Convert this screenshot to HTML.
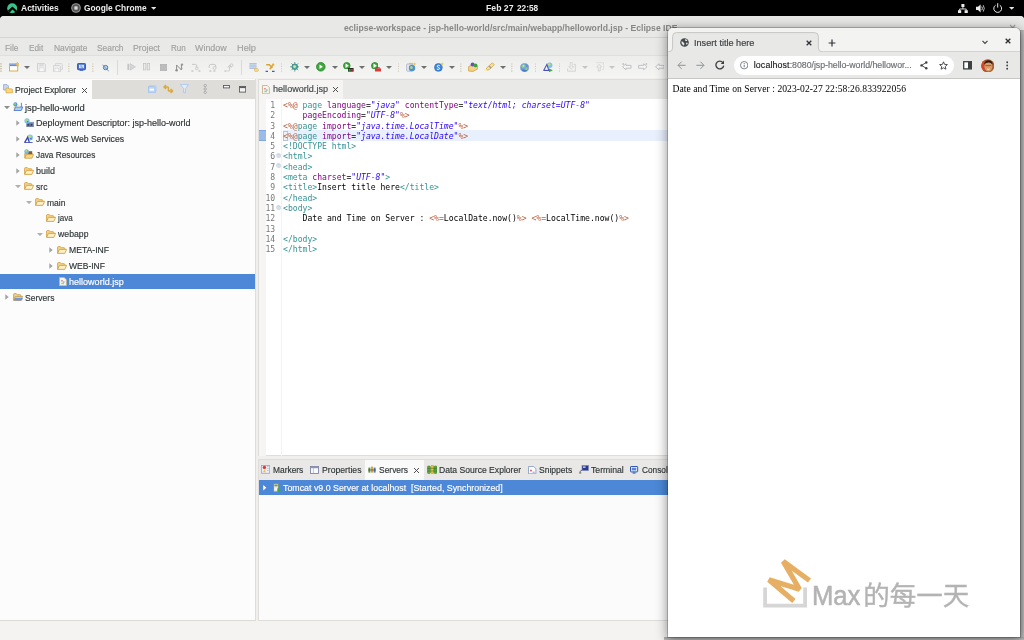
<!DOCTYPE html>
<html lang="en">
<head>
<meta charset="utf-8">
<title>Eclipse IDE - helloworld.jsp</title>
<style>
html,body{margin:0;padding:0;}
body{width:1024px;height:640px;overflow:hidden;background:#000;font-family:"Liberation Sans","DejaVu Sans",sans-serif;}
#root{position:relative;width:1024px;height:640px;overflow:hidden;background:#000;}
#root div, #root span.t, #root svg{position:absolute;}
span.t{white-space:pre;will-change:opacity;}
span.u{font-family:"Liberation Sans","DejaVu Sans",sans-serif;-webkit-text-stroke:.16px;}
span.m{font-family:"DejaVu Sans Mono","Liberation Mono",monospace;}
span.s{font-family:"Liberation Serif","DejaVu Serif",serif;}
span.c{font-family:"Liberation Sans","Noto Sans CJK SC",sans-serif;-webkit-text-stroke:.35px;}
/* GNOME top bar */
#topbar{left:0;top:0;width:1024px;height:16px;background:#000;}
/* Eclipse window */
#ecl{left:0;top:16px;width:1024px;height:624px;background:#e8e8e7;border-radius:4px 4px 0 0;overflow:hidden;}
#ecl-title{left:0;top:0;width:1024px;height:22px;background:#e8e8e7;border-bottom:1px solid #d4d4d3;box-sizing:border-box;}
#ecl-menu{left:0;top:22px;width:1024px;height:18px;background:#e9e9e8;border-bottom:1px solid #dfdfde;box-sizing:border-box;}
#ecl-tool{left:0;top:40px;width:1024px;height:22px;background:linear-gradient(#ededec,#f5f5f4);}
#ecl-work{left:0;top:62px;width:1024px;height:562px;background:#f1efed;}
/* left panel */
#pe{left:0;top:79px;width:255px;height:540.5px;background:#fcfcfc;border-right:1px solid #dfddd9;border-bottom:1px solid #dddbd8;box-sizing:content-box;}
#pe-tabs{left:0;top:.6px;width:255px;height:19px;background:#dfddda;}
#pe-tab{left:0;top:0;width:92px;height:19px;background:#fcfcfc;}
#pe-sel{left:0;top:194.6px;width:255px;height:15.6px;background:#4c88d7;}
/* editor */
#ed{left:258px;top:79px;width:766px;height:377px;background:#fff;border:1px solid #dfddd9;box-sizing:border-box;}
#ed-tabs{left:0;top:0;width:766px;height:18.5px;background:#e9e9e8;}
#ed-tab{left:0;top:0;width:84px;height:18.5px;background:#f5f4f3;}
#ed-ruler{left:0;top:18.5px;width:7px;height:357px;background:#f6f5f3;}
#ed-mark{left:0;top:50.3px;width:7px;height:10.6px;background:#9dbbe9;border-top:.6px solid #7fa7e4;border-bottom:.6px solid #7fa7e4;box-sizing:border-box;}
#ed-lnsep{left:22px;top:18.5px;width:1px;height:357px;background:#f3f3f3;}
#ed-cur{left:24px;top:50.4px;width:742px;height:10.2px;background:#e8f0fd;}
#ed-caret{left:24px;top:50.8px;width:4.6px;height:9.8px;border:.7px solid #c2c2c2;box-sizing:border-box;background:#eef3fb;}
/* bottom panel */
#bp{left:258px;top:459px;width:766px;height:161.5px;background:#fbfbfb;border:1px solid #dfddd9;box-sizing:border-box;}
#bp-tabs{left:0;top:0;width:766px;height:19.5px;background:#e9e8e6;}
#bp-tab{left:105.6px;top:0;width:59.4px;height:19.5px;background:#fafafa;}
#bp-sel{left:0;top:19.5px;width:766px;height:15.8px;background:#4c88d7;}
#status{left:0;top:621px;width:1024px;height:19px;background:#f4f3f2;}
/* chrome window */
#chr-shadow{left:659px;top:22px;width:365px;height:618px;}
#chr{z-index:5;left:668px;top:28px;width:352px;height:609px;background:#fff;border-radius:5px 5px 0 0;overflow:hidden;box-shadow:0 2px 12px 1px rgba(0,0,0,.42),0 0 0 1px rgba(0,0,0,.2);}
#chr-strip{left:0;top:0;width:353px;height:24px;background:#f3f3f2;}
#chr-tool{left:0;top:24px;width:353px;height:26.6px;background:#e8e8e7;border-bottom:1px solid #c6c6c5;box-sizing:border-box;}
#chr-omni{left:65.5px;top:4.3px;width:220.8px;height:18.8px;background:#fff;border-radius:9.4px;}
#chr-edge-r{z-index:5;left:1020px;top:30px;width:4px;height:610px;background:linear-gradient(90deg,#a9a9a9,#c4c4c4);}
#chr-edge-b{z-index:5;left:664px;top:637px;width:360px;height:3px;background:linear-gradient(#a8a8a8,#c0c0c0);}
</style>
</head>
<body>
<div id="root">
<div id="topbar"></div>
<div id="ecl">
  <div id="ecl-title"></div>
  <div id="ecl-menu"></div>
  <div id="ecl-tool"></div>
  <div id="ecl-work"></div>
</div>
<div id="pe"><div id="pe-tabs"><div id="pe-tab"></div></div><div id="pe-sel"></div></div>
<div id="ed"><div id="ed-tabs"><div id="ed-tab"></div></div><div id="ed-ruler"></div><div id="ed-lnsep"></div><div id="ed-cur"></div><div id="ed-caret"></div><div id="ed-mark"></div></div>
<div id="bp"><div id="bp-tabs"><div id="bp-tab"></div></div><div id="bp-sel"></div></div>
<div id="status"></div>
<div id="chr-edge-r"></div><div id="chr-edge-b"></div>
<div id="chr">
  <div id="chr-strip"></div>
  <svg style="left:0;top:0" width="353" height="26" viewBox="0 0 353 26"><path d="M-1 23.8H1Q4.6 23.8 4.6 20V8.4Q4.6 4.6 8.4 4.6H146.6Q150.4 4.6 150.4 8.4V20Q150.4 23.8 154 23.8H354V27H-1Z" fill="#e8e8e7" stroke="#c2c2c1" stroke-width=".9"/></svg>
  <div id="chr-tool"><div id="chr-omni"></div></div>
</div>

<!-- icons -->
<svg style="left:4.00px;top:105.95px;" width="6" height="3.2" viewBox="0 0 6 3.2"><path d="M0 0H6L3.0 3.2Z" fill="#8e8e8e"/></svg>
<svg style="left:16.30px;top:120.08px;" width="4" height="6" viewBox="0 0 4 6"><path d="M.3 .2L3.7 3L.3 5.8Z" fill="#a2a2a2"/></svg>
<svg style="left:16.30px;top:135.91px;" width="4" height="6" viewBox="0 0 4 6"><path d="M.3 .2L3.7 3L.3 5.8Z" fill="#a2a2a2"/></svg>
<svg style="left:16.30px;top:151.74px;" width="4" height="6" viewBox="0 0 4 6"><path d="M.3 .2L3.7 3L.3 5.8Z" fill="#a2a2a2"/></svg>
<svg style="left:16.30px;top:167.57px;" width="4" height="6" viewBox="0 0 4 6"><path d="M.3 .2L3.7 3L.3 5.8Z" fill="#a2a2a2"/></svg>
<svg style="left:15.00px;top:185.10px;" width="6" height="3.2" viewBox="0 0 6 3.2"><path d="M0 0H6L3.0 3.2Z" fill="#b0b0b0"/></svg>
<svg style="left:26.00px;top:200.93px;" width="6" height="3.2" viewBox="0 0 6 3.2"><path d="M0 0H6L3.0 3.2Z" fill="#b0b0b0"/></svg>
<svg style="left:37.00px;top:232.59px;" width="6" height="3.2" viewBox="0 0 6 3.2"><path d="M0 0H6L3.0 3.2Z" fill="#b0b0b0"/></svg>
<svg style="left:49.30px;top:246.72px;" width="4" height="6" viewBox="0 0 4 6"><path d="M.3 .2L3.7 3L.3 5.8Z" fill="#a2a2a2"/></svg>
<svg style="left:49.30px;top:262.55px;" width="4" height="6" viewBox="0 0 4 6"><path d="M.3 .2L3.7 3L.3 5.8Z" fill="#a2a2a2"/></svg>
<svg style="left:5.30px;top:294.21px;" width="4" height="6" viewBox="0 0 4 6"><path d="M.3 .2L3.7 3L.3 5.8Z" fill="#a2a2a2"/></svg>
<svg style="left:24.00px;top:166.57px;" width="10.2" height="8" viewBox="0 0 10.2 8"><path d="M0.6 7.2V1.4Q0.6 .6 1.4 .6H3.3L4.3 1.7H7Q7.8 1.7 7.8 2.5V3.4" fill="#f3d58c" stroke="#d6a243" stroke-width=".9"/><path d="M0.6 7.4L2.4 3.4H9.6L7.8 7.4Z" fill="#fdf0c6" stroke="#d6a243" stroke-width=".9" stroke-linejoin="round"/></svg>
<svg style="left:24.00px;top:182.40px;" width="10.2" height="8" viewBox="0 0 10.2 8"><path d="M0.6 7.2V1.4Q0.6 .6 1.4 .6H3.3L4.3 1.7H7Q7.8 1.7 7.8 2.5V3.4" fill="#f3d58c" stroke="#d6a243" stroke-width=".9"/><path d="M0.6 7.4L2.4 3.4H9.6L7.8 7.4Z" fill="#fdf0c6" stroke="#d6a243" stroke-width=".9" stroke-linejoin="round"/></svg>
<svg style="left:35.00px;top:198.23px;" width="10.2" height="8" viewBox="0 0 10.2 8"><path d="M0.6 7.2V1.4Q0.6 .6 1.4 .6H3.3L4.3 1.7H7Q7.8 1.7 7.8 2.5V3.4" fill="#f3d58c" stroke="#d6a243" stroke-width=".9"/><path d="M0.6 7.4L2.4 3.4H9.6L7.8 7.4Z" fill="#fdf0c6" stroke="#d6a243" stroke-width=".9" stroke-linejoin="round"/></svg>
<svg style="left:46.00px;top:214.06px;" width="10.2" height="8" viewBox="0 0 10.2 8"><path d="M0.6 7.2V1.4Q0.6 .6 1.4 .6H3.3L4.3 1.7H7Q7.8 1.7 7.8 2.5V3.4" fill="#f3d58c" stroke="#d6a243" stroke-width=".9"/><path d="M0.6 7.4L2.4 3.4H9.6L7.8 7.4Z" fill="#fdf0c6" stroke="#d6a243" stroke-width=".9" stroke-linejoin="round"/></svg>
<svg style="left:46.00px;top:229.89px;" width="10.2" height="8" viewBox="0 0 10.2 8"><path d="M0.6 7.2V1.4Q0.6 .6 1.4 .6H3.3L4.3 1.7H7Q7.8 1.7 7.8 2.5V3.4" fill="#f3d58c" stroke="#d6a243" stroke-width=".9"/><path d="M0.6 7.4L2.4 3.4H9.6L7.8 7.4Z" fill="#fdf0c6" stroke="#d6a243" stroke-width=".9" stroke-linejoin="round"/></svg>
<svg style="left:57.00px;top:245.72px;" width="10.2" height="8" viewBox="0 0 10.2 8"><path d="M0.6 7.2V1.4Q0.6 .6 1.4 .6H3.3L4.3 1.7H7Q7.8 1.7 7.8 2.5V3.4" fill="#f3d58c" stroke="#d6a243" stroke-width=".9"/><path d="M0.6 7.4L2.4 3.4H9.6L7.8 7.4Z" fill="#fdf0c6" stroke="#d6a243" stroke-width=".9" stroke-linejoin="round"/></svg>
<svg style="left:57.00px;top:261.55px;" width="10.2" height="8" viewBox="0 0 10.2 8"><path d="M0.6 7.2V1.4Q0.6 .6 1.4 .6H3.3L4.3 1.7H7Q7.8 1.7 7.8 2.5V3.4" fill="#f3d58c" stroke="#d6a243" stroke-width=".9"/><path d="M0.6 7.4L2.4 3.4H9.6L7.8 7.4Z" fill="#fdf0c6" stroke="#d6a243" stroke-width=".9" stroke-linejoin="round"/></svg>
<svg style="left:13.00px;top:293.21px;" width="10.2" height="8" viewBox="0 0 10.2 8"><path d="M0.6 7.2V1.4Q0.6 .6 1.4 .6H3.3L4.3 1.7H7Q7.8 1.7 7.8 2.5V3.4" fill="#f0d490" stroke="#c9a04c" stroke-width=".9"/><path d="M0.6 7.4L2.4 3.4H9.6L7.8 7.4Z" fill="#b9d3f2" stroke="#c9a04c" stroke-width=".9" stroke-linejoin="round"/></svg>
<svg style="left:13.50px;top:298.41px;" width="9" height="3" viewBox="0 0 9 3"><path d="M0 2.6L1 0H9L8 2.6Z" fill="#5b86d8" opacity=".75"/></svg>
<svg style="left:12.80px;top:101.95px;" width="10.2" height="9.4" viewBox="0 0 10.2 9.4"><path d="M1 8.6L2.4 5H9.8L8.2 8.6Z" fill="#a8d0f6" stroke="#4a78d2" stroke-width=".9" stroke-linejoin="round"/><path d="M8.4 5V.8" stroke="#5b86d8" stroke-width="1"/><path d="M4 4.8L5.4 2.2L7 4.8Z" fill="#f4e2a6"/><circle cx="2.4" cy="2.4" r="2.1" fill="#4f9fd8"/><circle cx="2" cy="2" r="1" fill="#9bd070"/><path d="M.8 5.2L2 6.8" stroke="#d9a64a" stroke-width=".9"/></svg>
<svg style="left:24.00px;top:117.68px;" width="10.2" height="9.6" viewBox="0 0 10.2 9.6"><rect x="2.4" y="4.2" width="7.4" height="5" fill="#6f80ad" stroke="#8e9cc4" stroke-width=".6"/><rect x="3.4" y="6.2" width="1.8" height="1.4" fill="#2b2f4a"/><rect x="6.6" y="6.2" width="1.8" height="1.4" fill="#2b2f4a"/><circle cx="3" cy="2.8" r="2.6" fill="#7cc3e6"/><circle cx="2.6" cy="2.2" r="1.2" fill="#b8dc6a"/><circle cx="3.6" cy="3.8" r=".8" fill="#3a76c8"/></svg>
<svg style="left:24.20px;top:133.91px;" width="9.6" height="9.4" viewBox="0 0 9.6 9.4"><circle cx="6" cy="3.4" r="3" fill="#8cc6ea"/><circle cx="5.6" cy="2.8" r="1.3" fill="#c2e07a"/><circle cx="7" cy="4.6" r=".9" fill="#3f78c8"/><path d="M.6 8.6L3.6 3.4L5.4 8.6" fill="none" stroke="#3a46b0" stroke-width="1.3"/><path d="M.4 8.8H8.6" stroke="#2e3aa6" stroke-width="1.1"/></svg>
<svg style="left:24.00px;top:149.34px;" width="10.2" height="9.8" viewBox="0 0 10.2 9.8"><path d="M0.8 9V4.4H8.2V5.2" fill="#e7c172" stroke="#c99a3e" stroke-width=".8"/><rect x="4.2" y="2.2" width="4" height="3" fill="#8a5a34"/><path d="M0.8 9.2L2.4 5.6H9.6L8 9.2Z" fill="#f6d98e" stroke="#cf9f40" stroke-width=".8" stroke-linejoin="round"/><circle cx="2.6" cy="2.6" r="2.3" fill="#6fb7e2"/><circle cx="2.2" cy="2.1" r="1.1" fill="#b4da6c"/></svg>
<svg style="left:58.80px;top:276.68px;" width="8" height="9.4" viewBox="0 0 8 9.4"><path d="M.5 .5H5.2L7.4 2.7V8.8H.5Z" fill="#f7f5ea" stroke="#c2b58a" stroke-width=".9"/><rect x="2" y="3" width="1.8" height="1.5" fill="#e58fa0"/><rect x="3.8" y="4.3" width="1.8" height="1.5" fill="#8fb4e8"/><rect x="2.2" y="5.8" width="2.8" height="1.4" fill="#9fd09a"/></svg>
<svg style="left:262.10px;top:84.70px;" width="8" height="9.4" viewBox="0 0 8 9.4"><path d="M.5 .5H5.2L7.4 2.7V8.8H.5Z" fill="#f7f5ea" stroke="#c2b58a" stroke-width=".9"/><rect x="2" y="3" width="1.8" height="1.5" fill="#e58fa0"/><rect x="3.8" y="4.3" width="1.8" height="1.5" fill="#8fb4e8"/><rect x="2.2" y="5.8" width="2.8" height="1.4" fill="#9fd09a"/></svg>
<svg style="left:2.80px;top:84.40px;" width="10" height="9.4" viewBox="0 0 10 9.4"><path d="M.6 .6H4L5.4 2V6H.6Z" fill="#c9daf0" stroke="#8fa6cc" stroke-width=".8"/><path d="M3 8.8V4.6Q3 4 3.6 4H5.2L6 4.9H8.8Q9.4 4.9 9.4 5.5V8.8Z" fill="#fbdc78" stroke="#d9a63e" stroke-width=".8"/></svg>
<svg style="left:81.20px;top:86.50px;" width="7.0" height="7.0" viewBox="0 0 7.0 7.0"><path d="M1 1L6.0 6.0M6.0 1L1 6.0" stroke="#444444" stroke-width="0.95" fill="none"/></svg>
<svg style="left:332.10px;top:86.10px;" width="7.0" height="7.0" viewBox="0 0 7.0 7.0"><path d="M1 1L6.0 6.0M6.0 1L1 6.0" stroke="#444444" stroke-width="0.95" fill="none"/></svg>
<svg style="left:412.70px;top:466.50px;" width="7.0" height="7.0" viewBox="0 0 7.0 7.0"><path d="M1 1L6.0 6.0M6.0 1L1 6.0" stroke="#444444" stroke-width="0.95" fill="none"/></svg>
<svg style="left:148.00px;top:85.20px;" width="8.6" height="8.2" viewBox="0 0 8.6 8.2"><rect x="1.4" y=".4" width="6.8" height="6.4" rx=".6" fill="#d6e4f8" stroke="#b4cdf0" stroke-width=".7"/><rect x=".4" y="1.4" width="6.8" height="6.4" rx=".6" fill="#bdd6f5" stroke="#9dbfec" stroke-width=".8"/><rect x="1.6" y="3.7" width="4.4" height="1.9" fill="#fff"/></svg>
<svg style="left:163.00px;top:84.20px;" width="10.6" height="10" viewBox="0 0 10.6 10"><path d="M1 3H5.4M3 1L1 3L3 5M9.6 7H5.2M7.6 5L9.6 7L7.6 9M5.4 3V7" fill="none" stroke="#d9a93c" stroke-width="1.5"/></svg>
<svg style="left:180.00px;top:84.40px;" width="9" height="9.4" viewBox="0 0 9 9.4"><path d="M.5 .6H8.5L5.4 4.4V8.8H3.6V4.4Z" fill="#e6effb" stroke="#a3c2ec" stroke-width=".8" stroke-linejoin="round"/></svg>
<svg style="left:203.40px;top:84.20px;" width="4.4" height="10" viewBox="0 0 4.4 10"><circle cx="2.2" cy="1.6" r="1.15" fill="#ececec" stroke="#7d7d7d" stroke-width=".55"/><circle cx="2.2" cy="5" r="1.15" fill="#ececec" stroke="#7d7d7d" stroke-width=".55"/><circle cx="2.2" cy="8.4" r="1.15" fill="#ececec" stroke="#7d7d7d" stroke-width=".55"/></svg>
<svg style="left:223.00px;top:85.40px;" width="7" height="3.6" viewBox="0 0 7 3.6"><rect x=".5" y=".5" width="6" height="2.4" fill="#f6f6f6" stroke="#5c5c5c" stroke-width=".9"/></svg>
<svg style="left:239.00px;top:85.80px;" width="7.4" height="6.8" viewBox="0 0 7.4 6.8"><rect x=".5" y=".5" width="6.2" height="5.6" fill="#f3f3f3" stroke="#5c5c5c" stroke-width=".9"/><rect x=".5" y=".5" width="6.2" height="1.6" fill="#5c5c5c"/></svg>
<svg style="left:0.00px;top:62.60px;" width="2.4" height="9.4" viewBox="0 0 2.4 9.4"><path d="M0 .9H2.2M0 3.3H2.2M0 5.7H2.2M0 8.1H2.2" stroke="#c8bda4" stroke-width="1"/></svg>
<svg style="left:9.00px;top:62.40px;" width="10.4" height="9.6" viewBox="0 0 10.4 9.6"><rect x=".5" y="1.8" width="8.2" height="7.2" fill="#fff" stroke="#d6a740" stroke-width=".9"/><rect x="1" y="2.3" width="7.2" height="1.8" fill="#5d8fe0"/><path d="M8.4 0L9 1.4L10.4 1.6L9.4 2.6L9.6 4L8.4 3.3L7.2 4L7.4 2.6L6.4 1.6L7.8 1.4Z" fill="#f2c94c" stroke="#c99a2e" stroke-width=".3"/></svg>
<svg style="left:23.80px;top:65.90px;" width="6" height="3" viewBox="0 0 6 3"><path d="M0 0H6L3.0 3Z" fill="#6f6f6f"/></svg>
<svg style="left:36.50px;top:62.80px;" width="9.4" height="9" viewBox="0 0 9.4 9"><path d="M.5 .5H7.4L8.7 1.8V8.4H.5Z" fill="#ececec" stroke="#cfcfcf" stroke-width=".9"/><rect x="2.2" y=".8" width="4.4" height="2.6" fill="#dcdcdc"/><rect x="2.4" y="5" width="4.6" height="3.4" fill="#f8f8f8" stroke="#d5d5d5" stroke-width=".5"/></svg>
<svg style="left:53.00px;top:62.60px;" width="10" height="9.4" viewBox="0 0 10 9.4"><path d="M2.5 .5H8.6L9.5 1.4V6.6H2.5Z" fill="#ececec" stroke="#d2d2d2" stroke-width=".8"/><path d="M.5 2.5H6.6L7.5 3.4V8.8H.5Z" fill="#ececec" stroke="#cfcfcf" stroke-width=".8"/><rect x="2" y="5.6" width="3.8" height="3" fill="#f8f8f8" stroke="#d5d5d5" stroke-width=".5"/></svg>
<svg style="left:68.30px;top:62.60px;" width="1.6" height="9.4" viewBox="0 0 1.6 9.4"><path d="M.8 .4V9.4" stroke="#c9bfa8" stroke-width="1.1" stroke-dasharray="1.1 1.3"/></svg>
<svg style="left:76.80px;top:62.60px;" width="9" height="8.6" viewBox="0 0 9 8.6"><rect x=".5" y=".5" width="8" height="6.2" rx=".8" fill="#4a72cc" stroke="#2f55ad" stroke-width=".9"/><rect x="2" y="1.8" width="5" height="3.4" fill="#d7e6fb"/><path d="M3 3H5.2M3.8 4.2H6.2" stroke="#4468b8" stroke-width=".6"/><rect x="2.6" y="7.2" width="3.8" height="1.2" fill="#3a5fb8"/></svg>
<svg style="left:92.10px;top:62.60px;" width="1.6" height="9.4" viewBox="0 0 1.6 9.4"><path d="M.8 .4V9.4" stroke="#c9bfa8" stroke-width="1.1" stroke-dasharray="1.1 1.3"/></svg>
<svg style="left:101.60px;top:63.60px;" width="7.6" height="8" viewBox="0 0 7.6 8"><circle cx="3.6" cy="3.6" r="2.2" fill="#bcd7f2" stroke="#3d7fc8" stroke-width="1"/><path d="M.4 .6L7.2 7.6" stroke="#7d8fa8" stroke-width="1"/></svg>
<svg style="left:117.00px;top:59.50px;" width="1" height="15" viewBox="0 0 1 15"><rect width="1" height="15" fill="#d9d9d8"/></svg>
<svg style="left:126.50px;top:63.20px;" width="9" height="8" viewBox="0 0 9 8"><rect x=".4" y=".8" width="1.6" height="6.2" fill="#c4c4c4"/><path d="M3 .6L8.4 3.9L3 7.2Z" fill="#d6d6d6" stroke="#c4c4c4" stroke-width=".7"/></svg>
<svg style="left:143.00px;top:63.40px;" width="7.4" height="7.6" viewBox="0 0 7.4 7.6"><rect x=".5" y=".5" width="2.4" height="6.4" fill="#ebebeb" stroke="#c4c4c4" stroke-width=".8"/><rect x="4.3" y=".5" width="2.4" height="6.4" fill="#ebebeb" stroke="#c4c4c4" stroke-width=".8"/></svg>
<svg style="left:159.50px;top:63.60px;" width="7.4" height="7.4" viewBox="0 0 7.4 7.4"><rect x=".5" y=".5" width="6.2" height="6.2" fill="#bdbdbd" stroke="#b2b2b2" stroke-width=".8"/></svg>
<svg style="left:175.00px;top:62.80px;" width="9" height="8.8" viewBox="0 0 9 8.8"><path d="M1.6 7.2V2L6.4 7V1.6" fill="none" stroke="#8d8d8d" stroke-width="1"/><circle cx="1.6" cy="7.2" r="1.2" fill="#8d8d8d"/><circle cx="7" cy="1.6" r="1.2" fill="#9a9a9a"/><circle cx="6.6" cy="5.4" r=".9" fill="#9a9a9a"/></svg>
<svg style="left:191.00px;top:63.00px;" width="9.6" height="8.6" viewBox="0 0 9.6 8.6"><path d="M1 1.4H4.4Q5.8 1.4 5.8 3V4.6" fill="none" stroke="#c4c4c4" stroke-width=".9"/><circle cx="5.8" cy="5.4" r="1.4" fill="none" stroke="#c4c4c4" stroke-width=".8"/><path d="M.4 8H2.4M7.4 8H9.4" stroke="#b4b4b4" stroke-width="1.1"/></svg>
<svg style="left:208.00px;top:63.00px;" width="9.4" height="8.6" viewBox="0 0 9.4 8.6"><path d="M1.2 5V3.2Q1.2 1.4 3 1.4H6Q7.8 1.4 7.8 3.2V4" fill="none" stroke="#c4c4c4" stroke-width=".9"/><circle cx="6.6" cy="5" r="1.5" fill="none" stroke="#c4c4c4" stroke-width=".8"/><path d="M1.4 8H3.4M5.4 8H7.4" stroke="#b4b4b4" stroke-width="1.1"/></svg>
<svg style="left:223.60px;top:63.00px;" width="10.4" height="8.6" viewBox="0 0 10.4 8.6"><path d="M5.6 7.6V3.4M3.8 4.6L5.6 2.2L7.4 4.6" fill="none" stroke="#c4c4c4" stroke-width=".9"/><circle cx="7.6" cy="2.2" r="1.4" fill="none" stroke="#c4c4c4" stroke-width=".8"/><path d="M.4 8H2.4M3.6 8H4.6" stroke="#b4b4b4" stroke-width="1.1"/></svg>
<svg style="left:241.00px;top:59.50px;" width="1" height="15" viewBox="0 0 1 15"><rect width="1" height="15" fill="#d9d9d8"/></svg>
<svg style="left:248.60px;top:62.80px;" width="10" height="9" viewBox="0 0 10 9"><path d="M.4 .9H7.6M.4 3H7.6M.4 5.1H7.6" stroke="#5f90dc" stroke-width=".75"/><path d="M5 5.4H8.4L9.8 7L8.4 8.6H6Z" fill="#f5d98a" stroke="#d8ac4a" stroke-width=".5"/></svg>
<svg style="left:265.00px;top:62.60px;" width="10.4" height="9.2" viewBox="0 0 10.4 9.2"><path d="M1.2 1.8H4.4L7.4 5M8.6 1L4.8 6.2" fill="none" stroke="#d8a532" stroke-width="1.5"/><circle cx="8.2" cy="1.6" r="1.2" fill="#e3b548"/><path d="M.6 8.4H3M7 8.4H9.6" stroke="#3f5fb4" stroke-width="1.2"/></svg>
<svg style="left:280.70px;top:62.60px;" width="1.6" height="9.4" viewBox="0 0 1.6 9.4"><path d="M.8 .4V9.4" stroke="#c9bfa8" stroke-width="1.1" stroke-dasharray="1.1 1.3"/></svg>
<svg style="left:289.60px;top:62.40px;" width="9.6" height="9.6" viewBox="0 0 9.6 9.6"><path d="M4.8 0V9.6M0 4.8H9.6M1.4 1.4L8.2 8.2M8.2 1.4L1.4 8.2" stroke="#3f8f8a" stroke-width=".8"/><circle cx="4.8" cy="4.8" r="2.8" fill="#5aa7a0" stroke="#2e7d78" stroke-width=".7"/><circle cx="4.6" cy="4.6" r="1.4" fill="#cfe8b0"/></svg>
<svg style="left:304.30px;top:65.90px;" width="6" height="3" viewBox="0 0 6 3"><path d="M0 0H6L3.0 3Z" fill="#6f6f6f"/></svg>
<svg style="left:316.40px;top:62.40px;" width="9.6" height="9.6" viewBox="0 0 9.6 9.6"><circle cx="4.8" cy="4.8" r="4.3" fill="#3ea83a" stroke="#2a8328" stroke-width=".8"/><path d="M3.4999999999999996 2.5999999999999996L6.8999999999999995 4.8L3.4999999999999996 7.0Z" fill="#fff"/></svg>
<svg style="left:331.50px;top:65.90px;" width="6" height="3" viewBox="0 0 6 3"><path d="M0 0H6L3.0 3Z" fill="#6f6f6f"/></svg>
<svg style="left:343.40px;top:61.80px;" width="7.6000000000000005" height="7.6000000000000005" viewBox="0 0 7.6000000000000005 7.6000000000000005"><circle cx="3.8000000000000003" cy="3.8000000000000003" r="3.3000000000000003" fill="#3ea83a" stroke="#2a8328" stroke-width=".8"/><path d="M2.5 1.6L5.9 3.8000000000000003L2.5 6.0Z" fill="#fff"/></svg>
<svg style="left:348.00px;top:67.60px;" width="5.6" height="4" viewBox="0 0 5.6 4"><rect width="5.6" height="3.6" fill="#222"/><rect x=".6" y=".9" width="2" height="1.8" fill="#2eb82e"/><rect x="3" y=".9" width="2" height="1.8" fill="#d82a2a"/></svg>
<svg style="left:359.00px;top:65.90px;" width="6" height="3" viewBox="0 0 6 3"><path d="M0 0H6L3.0 3Z" fill="#6f6f6f"/></svg>
<svg style="left:370.80px;top:61.80px;" width="7.6000000000000005" height="7.6000000000000005" viewBox="0 0 7.6000000000000005 7.6000000000000005"><circle cx="3.8000000000000003" cy="3.8000000000000003" r="3.3000000000000003" fill="#3ea83a" stroke="#2a8328" stroke-width=".8"/><path d="M2.5 1.6L5.9 3.8000000000000003L2.5 6.0Z" fill="#fff"/></svg>
<svg style="left:375.40px;top:67.00px;" width="6" height="4.8" viewBox="0 0 6 4.8"><path d="M1.6 1.4V.4H4.4V1.4" fill="none" stroke="#c43232" stroke-width=".8"/><rect x="0" y="1.2" width="6" height="3.4" rx=".5" fill="#d83a3a"/></svg>
<svg style="left:386.30px;top:65.90px;" width="6" height="3" viewBox="0 0 6 3"><path d="M0 0H6L3.0 3Z" fill="#6f6f6f"/></svg>
<svg style="left:397.50px;top:62.60px;" width="1.6" height="9.4" viewBox="0 0 1.6 9.4"><path d="M.8 .4V9.4" stroke="#c9bfa8" stroke-width="1.1" stroke-dasharray="1.1 1.3"/></svg>
<svg style="left:406.00px;top:62.20px;" width="10.6" height="10" viewBox="0 0 10.6 10"><rect x=".6" y="2" width="6.4" height="7.2" rx="1" fill="#e3e6ee" stroke="#a9b0c4" stroke-width=".8"/><circle cx="6" cy="6" r="3.2" fill="#4f8fd8"/><circle cx="5.4" cy="5.4" r="1.5" fill="#a6d86c"/><path d="M8.6 .2L9.1 1.3L10.3 1.5L9.4 2.3L9.6 3.5L8.6 2.9L7.6 3.5L7.8 2.3L6.9 1.5L8.1 1.3Z" fill="#f2c94c"/><path d="M3 1.4H7" stroke="#d9b44a" stroke-width=".8"/></svg>
<svg style="left:421.00px;top:65.90px;" width="6" height="3" viewBox="0 0 6 3"><path d="M0 0H6L3.0 3Z" fill="#6f6f6f"/></svg>
<svg style="left:433.60px;top:62.40px;" width="10" height="9.8" viewBox="0 0 10 9.8"><circle cx="4.4" cy="5.4" r="3.9" fill="#3f86d6" stroke="#2c6cba" stroke-width=".6"/><path d="M5.8 3.8Q4.4 2.8 3.4 3.8Q2.8 4.8 4.4 5.4Q6 6 5.4 7Q4.4 8 2.8 7" fill="none" stroke="#fff" stroke-width="1"/><path d="M8.2 .2L8.7 1.3L9.9 1.5L9 2.3L9.2 3.5L8.2 2.9L7.2 3.5L7.4 2.3L6.5 1.5L7.7 1.3Z" fill="#f2c94c"/></svg>
<svg style="left:448.60px;top:65.90px;" width="6" height="3" viewBox="0 0 6 3"><path d="M0 0H6L3.0 3Z" fill="#6f6f6f"/></svg>
<svg style="left:460.30px;top:62.60px;" width="1.6" height="9.4" viewBox="0 0 1.6 9.4"><path d="M.8 .4V9.4" stroke="#c9bfa8" stroke-width="1.1" stroke-dasharray="1.1 1.3"/></svg>
<svg style="left:467.80px;top:62.40px;" width="10.4" height="9.8" viewBox="0 0 10.4 9.8"><path d="M.6 9V4.6L5 2.4L9.6 4.6V7L5 9.4Z" fill="#f3d488" stroke="#cf9f3f" stroke-width=".8" stroke-linejoin="round"/><circle cx="4.6" cy="2.4" r="2" fill="#6b4fc0"/><circle cx="7.6" cy="3.4" r="1.9" fill="#3fa03a"/></svg>
<svg style="left:484.00px;top:62.20px;" width="11" height="10" viewBox="0 0 11 10"><path d="M1 8.8L3.4 5.2L8.4 .8L10.2 2.6L5.6 7.4Z" fill="#f4e3a0" stroke="#d3a63c" stroke-width=".8" stroke-linejoin="round"/><path d="M5 4L7.2 6.2" stroke="#8c9ac0" stroke-width="1.4"/><circle cx="1.6" cy="8.4" r="1.2" fill="#fff6c8"/></svg>
<svg style="left:499.80px;top:65.90px;" width="6" height="3" viewBox="0 0 6 3"><path d="M0 0H6L3.0 3Z" fill="#6f6f6f"/></svg>
<svg style="left:511.30px;top:62.60px;" width="1.6" height="9.4" viewBox="0 0 1.6 9.4"><path d="M.8 .4V9.4" stroke="#c9bfa8" stroke-width="1.1" stroke-dasharray="1.1 1.3"/></svg>
<svg style="left:519.80px;top:62.60px;" width="9.2" height="9.2" viewBox="0 0 9.2 9.2"><circle cx="4.6" cy="4.6" r="4.1" fill="#5f97dc" stroke="#7f9cc8" stroke-width=".6"/><circle cx="3.6" cy="3.4" r="2.2" fill="#8fbcec" opacity=".7"/><path d="M1.6 3Q3 1.2 4.8 1.6Q5.4 3 4 3.8Q3.4 5 2.4 5.2Q1.4 4.4 1.6 3ZM5.4 4.4Q7 3.8 7.8 5Q7.4 7 5.8 7.8Q5 6.4 5.4 4.4Z" fill="#9ccf6a"/><circle cx="3.4" cy="2.8" r=".8" fill="#f1e49a"/><path d="M2.4 7.4Q4.6 8.8 6.8 7.6" stroke="#2f5fae" stroke-width=".8" fill="none"/></svg>
<svg style="left:534.90px;top:62.60px;" width="1.6" height="9.4" viewBox="0 0 1.6 9.4"><path d="M.8 .4V9.4" stroke="#c9bfa8" stroke-width="1.1" stroke-dasharray="1.1 1.3"/></svg>
<svg style="left:543.20px;top:62.20px;" width="10.4" height="10.2" viewBox="0 0 10.4 10.2"><circle cx="6.6" cy="3.2" r="2.8" fill="#7fc0e8"/><circle cx="6.2" cy="2.6" r="1.2" fill="#c6e07c"/><path d="M.8 8.2L3.8 2.6L5.8 8.2" fill="none" stroke="#4656bc" stroke-width="1.05"/><path d="M.4 8.4H6" stroke="#2e3aa6" stroke-width="1"/><path d="M6 6.4L9.8 8.3L6 10.2Z" fill="#3aa53a"/></svg>
<svg style="left:558.80px;top:62.60px;" width="1.6" height="9.4" viewBox="0 0 1.6 9.4"><path d="M.8 .4V9.4" stroke="#c9bfa8" stroke-width="1.1" stroke-dasharray="1.1 1.3"/></svg>
<svg style="left:567.20px;top:62.40px;" width="9.2" height="9.8" viewBox="0 0 9.2 9.8"><path d="M3.2 .6H5.2V4.6H6.6L4.2 7.4L1.8 4.6H3.2Z" fill="#f0f0f0" stroke="#cdcdcd" stroke-width=".7"/><path d="M.6 6.4V9.2H8.4V2.4H6.6" fill="none" stroke="#cdcdcd" stroke-width=".8"/></svg>
<svg style="left:582.10px;top:65.90px;" width="6" height="3" viewBox="0 0 6 3"><path d="M0 0H6L3.0 3Z" fill="#c6c6c6"/></svg>
<svg style="left:594.60px;top:62.40px;" width="9.4" height="9.8" viewBox="0 0 9.4 9.8"><path d="M3.2 9H5.2V5H6.6L4.2 2.2L1.8 5H3.2Z" fill="#f0f0f0" stroke="#cdcdcd" stroke-width=".7"/><path d="M1.4 .6H8.6V7.6H6.6" fill="none" stroke="#cdcdcd" stroke-width=".8" stroke-dasharray="1.2 .8"/></svg>
<svg style="left:609.20px;top:65.90px;" width="6" height="3" viewBox="0 0 6 3"><path d="M0 0H6L3.0 3Z" fill="#c6c6c6"/></svg>
<svg style="left:622.20px;top:63.40px;" width="9.8" height="7.8" viewBox="0 0 9.8 7.8"><path d="M.6 3.8L4 .8V2.4H9V5.2H4V6.8Z" fill="#f6f6f6" stroke="#b4b4b4" stroke-width=".8" stroke-linejoin="round"/><circle cx="1.2" cy="1" r=".9" fill="#c2c2c2"/></svg>
<svg style="left:638.00px;top:63.40px;" width="9.8" height="7.8" viewBox="0 0 9.8 7.8"><path d="M.6 3.8L4 .8V2.4H9V5.2H4V6.8Z" transform="translate(9.6 0) scale(-1 1)" fill="#f6f6f6" stroke="#b4b4b4" stroke-width=".8" stroke-linejoin="round"/><circle cx="8.4" cy="1" r=".9" fill="#c2c2c2"/></svg>
<svg style="left:654.60px;top:63.40px;" width="9.8" height="7.8" viewBox="0 0 9.8 7.8"><path d="M.6 3.8L4 .8V2.4H9V5.2H4V6.8Z" fill="#f6f6f6" stroke="#b4b4b4" stroke-width=".8" stroke-linejoin="round"/></svg>
<svg style="left:260.60px;top:465.20px;" width="9.4" height="9" viewBox="0 0 9.4 9"><rect x=".5" y=".5" width="8.2" height="7.8" fill="#e9eef6" stroke="#9aa5bd" stroke-width=".8"/><circle cx="3.4" cy="2.4" r="1.7" fill="#dc3a3a"/><path d="M2 7.2L3.4 4.6L4.8 7.2Z" fill="#f0b83a"/><path d="M6 1.5H7.6M6 3.5H7.6M6 5.5H7.6" stroke="#aab3c8" stroke-width=".7"/></svg>
<svg style="left:310.00px;top:465.60px;" width="9" height="8.2" viewBox="0 0 9 8.2"><rect x=".5" y=".5" width="8" height="7" fill="#fafafc" stroke="#7f86a6" stroke-width=".9"/><rect x=".9" y=".9" width="7.2" height="1.3" fill="#8b93b6"/><path d="M3.4 2.2V7.4" stroke="#9aa1be" stroke-width=".6"/></svg>
<svg style="left:368.20px;top:465.80px;" width="8" height="7.6" viewBox="0 0 8 7.6"><rect x=".4" y="1.6" width="2" height="5" fill="#5e8f3a"/><rect x="3" y=".6" width="2" height="6" fill="#d9a23a"/><rect x="5.6" y="1.6" width="2" height="5" fill="#4a78c8"/><path d="M0 4H8" stroke="#3a3a3a" stroke-width=".6"/></svg>
<svg style="left:426.80px;top:465.00px;" width="10.4" height="9.4" viewBox="0 0 10.4 9.4"><rect x=".4" y="1" width="3" height="7.6" rx="1" fill="#5aa83a" stroke="#3c7d28" stroke-width=".5"/><rect x="3.8" y=".4" width="3" height="8.2" rx="1" fill="#e0c040" stroke="#a68a22" stroke-width=".5"/><rect x="7" y="1" width="3" height="7.6" rx="1" fill="#5aa83a" stroke="#3c7d28" stroke-width=".5"/><path d="M.4 3.4H10M.4 6H10" stroke="#2f6a22" stroke-width=".5"/></svg>
<svg style="left:528.40px;top:465.60px;" width="8.6" height="8.4" viewBox="0 0 8.6 8.4"><path d="M.5 .5H5.6L7.9 2.8V7.8H.5Z" fill="#fbfcff" stroke="#7e95c4" stroke-width=".8"/><path d="M2 4.6H4M3 3.6V5.6" stroke="#d24a4a" stroke-width=".8"/><path d="M4.6 6.2H6.6" stroke="#5a7fd0" stroke-width=".8"/></svg>
<svg style="left:579.00px;top:465.40px;" width="10" height="9" viewBox="0 0 10 9"><rect x="3" y=".5" width="6.4" height="5" fill="#2b3a8c" stroke="#7a86b8" stroke-width=".7"/><rect x="4" y="1.5" width="2.6" height="1.2" fill="#e8ecff"/><path d="M.8 8.4Q.4 5.6 3 5.2" fill="none" stroke="#6f6f6f" stroke-width="1"/><circle cx="1.4" cy="7.8" r="1" fill="#8a8a8a"/></svg>
<svg style="left:630.40px;top:465.80px;z-index:1;" width="8.4" height="8" viewBox="0 0 8.4 8"><rect x=".5" y=".5" width="7.2" height="5.4" rx=".6" fill="#e6eefc" stroke="#2f55ad" stroke-width="1"/><rect x="2.6" y="6.4" width="3" height="1.2" fill="#3a5fb8"/><rect x="1.8" y="1.8" width="4.4" height="2.6" fill="#5d84d8"/></svg>
<svg style="left:263.40px;top:485.00px;" width="3.6" height="5.6" viewBox="0 0 3.6 5.6"><path d="M.2 .1L3.4 2.8L.2 5.5Z" fill="#fff"/></svg>
<svg style="left:272.80px;top:482.80px;" width="8.4" height="9.6" viewBox="0 0 8.4 9.6"><rect x=".5" y=".5" width="5" height="8.4" fill="#d8dccf" stroke="#7b8a6a" stroke-width=".8"/><rect x="1.4" y="1.6" width="3.2" height="1.6" fill="#6f9a4a"/><rect x="1.4" y="4.4" width="3.2" height="3" fill="#f4f4f0"/><path d="M4.4 5L8 7.2L4.4 9.4Z" fill="#2fae3a"/></svg>
<svg style="left:7.00px;top:3.20px;" width="10.4" height="10.4" viewBox="0 0 10.4 10.4"><defs><clipPath id="rk"><circle cx="5.2" cy="5.2" r="5"/></clipPath></defs><circle cx="5.2" cy="5.2" r="5" fill="#37c58a"/><path clip-path="url(#rk)" d="M-1 9.6L5.4 3.4L11.4 9.2V12L5.6 6.6L0 12H-1Z" fill="#000"/></svg>
<svg style="left:70.80px;top:3.20px;" width="10" height="10" viewBox="0 0 10 10"><circle cx="5" cy="5" r="4.8" fill="#9a9a9a"/><circle cx="5" cy="5" r="3" fill="none" stroke="#4e4e4e" stroke-width="1.4"/><circle cx="5" cy="5" r="1.4" fill="#d6d6d6"/></svg>
<svg style="left:151.10px;top:7.00px;" width="5.4" height="2.8" viewBox="0 0 5.4 2.8"><path d="M0 0H5.4L2.7 2.8Z" fill="#e6e6e6"/></svg>
<svg style="left:958.40px;top:3.60px;" width="9.8" height="9.4" viewBox="0 0 9.8 9.4"><rect x="3.4" y="0" width="3" height="3" fill="#ececec"/><rect x="0" y="6.2" width="3.2" height="3" fill="#ececec"/><rect x="6.6" y="6.2" width="3.2" height="3" fill="#ececec"/><path d="M4.9 3V5H1.6V6.4M4.9 5H8.2V6.4" fill="none" stroke="#ececec" stroke-width=".9"/></svg>
<svg style="left:975.60px;top:3.80px;" width="9.6" height="8.8" viewBox="0 0 9.6 8.8"><path d="M0 2.8H2L4.6 .4V8.4L2 6H0Z" fill="#ececec"/><path d="M5.8 2.6Q7 4.4 5.8 6.2" fill="none" stroke="#ececec" stroke-width=".9"/><path d="M7.2 1.2Q9.4 4.4 7.2 7.6" fill="none" stroke="#cfcfcf" stroke-width=".9"/></svg>
<svg style="left:993.00px;top:3.20px;" width="9.4" height="9.6" viewBox="0 0 9.4 9.6"><path d="M2.6 2.2A3.9 3.9 0 1 0 6.8 2.2" fill="none" stroke="#ececec" stroke-width="1"/><path d="M4.7 .2V4.6" stroke="#ececec" stroke-width="1"/></svg>
<svg style="left:1008.70px;top:7.00px;" width="5.4" height="2.8" viewBox="0 0 5.4 2.8"><path d="M0 0H5.4L2.7 2.8Z" fill="#e6e6e6"/></svg>
<svg style="left:680.00px;top:38.30px;z-index:6;" width="9" height="9" viewBox="0 0 9 9"><circle cx="4.5" cy="4.5" r="4.3" fill="#45494d"/><path d="M1.4 3.6Q3 3.2 3.4 4.6Q4.6 5 4.4 6.4Q3.6 7.6 3 7.4Q2.6 6 1.6 5.4ZM5 1.4Q6.4 1.2 7.4 2.4Q6.6 3.4 5.6 3Q4.8 2.2 5 1.4ZM6.4 4.6Q7.8 4.6 7.8 5.6Q7.2 6.8 6.4 6.6Q5.8 5.6 6.4 4.6Z" fill="#e8e8e7"/></svg>
<svg style="left:805.60px;top:39.80px;z-index:6;" width="6" height="6" viewBox="0 0 6 6"><path d="M.7 .7L5.3 5.3M5.3 .7L.7 5.3" stroke="#2f3336" stroke-width="1.3" fill="none"/></svg>
<svg style="left:828.20px;top:38.60px;z-index:6;" width="8" height="8" viewBox="0 0 8 8"><path d="M4 .6V7.4M.6 4H7.4" stroke="#2f3336" stroke-width="1.2" fill="none"/></svg>
<svg style="left:982.40px;top:40.20px;z-index:6;" width="6" height="4.4" viewBox="0 0 6 4.4"><path d="M.5 .8L3 3.4L5.5 .8" stroke="#3c4043" stroke-width="1.1" fill="none"/></svg>
<svg style="left:1005.20px;top:37.60px;z-index:6;" width="6" height="6" viewBox="0 0 6 6"><path d="M.7 .7L5.3 5.3M5.3 .7L.7 5.3" stroke="#2f3336" stroke-width="1.4" fill="none"/></svg>
<svg style="left:676.60px;top:60.80px;z-index:6;" width="9" height="8.6" viewBox="0 0 9 8.6"><path d="M8.6 4.3H1.2M4.6 .7L1 4.3L4.6 7.9" stroke="#8d9195" stroke-width="1" fill="none"/></svg>
<svg style="left:695.80px;top:60.80px;z-index:6;" width="9" height="8.6" viewBox="0 0 9 8.6"><path d="M.4 4.3H7.8M4.4 .7L8 4.3L4.4 7.9" stroke="#8d9195" stroke-width="1" fill="none"/></svg>
<svg style="left:715.40px;top:60.40px;z-index:6;" width="9.6" height="9.6" viewBox="0 0 9.6 9.6"><path d="M7.9 2.6A3.9 3.9 0 1 0 8.7 5.6" fill="none" stroke="#3c4043" stroke-width="1.3"/><path d="M9 .6V3.9H5.7Z" fill="#3c4043"/></svg>
<svg style="left:739.80px;top:61.20px;z-index:6;" width="8.4" height="8.4" viewBox="0 0 8.4 8.4"><circle cx="4.2" cy="4.2" r="3.7" fill="none" stroke="#5f6368" stroke-width=".8"/><path d="M4.2 3.8V6.2" stroke="#5f6368" stroke-width=".9"/><circle cx="4.2" cy="2.5" r=".55" fill="#5f6368"/></svg>
<svg style="left:920.40px;top:61.00px;z-index:6;" width="7.8" height="8.8" viewBox="0 0 7.8 8.8"><path d="M6.2 1.5L1.6 4.4L6.2 7.3" fill="none" stroke="#3c4043" stroke-width=".9"/><circle cx="6.3" cy="1.5" r="1.2" fill="#3c4043"/><circle cx="1.5" cy="4.4" r="1.2" fill="#3c4043"/><circle cx="6.3" cy="7.3" r="1.2" fill="#3c4043"/></svg>
<svg style="left:938.80px;top:60.60px;z-index:6;" width="9" height="9" viewBox="0 0 9 9"><path d="M4.5 .8L5.6 3.4L8.4 3.6L6.3 5.5L6.9 8.2L4.5 6.8L2.1 8.2L2.7 5.5L.6 3.6L3.4 3.4Z" fill="none" stroke="#3c4043" stroke-width=".9" stroke-linejoin="round"/></svg>
<svg style="left:962.80px;top:61.00px;z-index:6;" width="9.4" height="8.6" viewBox="0 0 9.4 8.6"><rect x=".7" y=".7" width="8" height="7.2" fill="#fff" stroke="#3c4043" stroke-width="1.3"/><rect x="5" y=".7" width="3.7" height="7.2" fill="#3c4043"/></svg>
<svg style="left:980.60px;top:58.60px;z-index:6;" width="13.6" height="13.6" viewBox="0 0 13.6 13.6"><defs><clipPath id="av"><circle cx="6.8" cy="6.8" r="6.6"/></clipPath></defs><g clip-path="url(#av)"><rect width="13.6" height="13.6" fill="#a85a2a"/><rect x="0" y="0" width="3.4" height="13.6" fill="#d6452a"/><ellipse cx="7.4" cy="7.6" rx="4" ry="4.8" fill="#d99a6a"/><path d="M3 5.4Q4 1 8 1.2Q11.6 1.6 11.6 5.6Q9.6 3.4 7.4 3.6Q5 3.6 3 5.4Z" fill="#2a1c14"/><path d="M4.4 6.6H10.4" stroke="#6b4a34" stroke-width=".7"/><path d="M6 10Q7.4 11 8.8 10" stroke="#fff" stroke-width=".7" fill="none"/></g></svg>
<svg style="left:1005.80px;top:61.00px;z-index:6;" width="2.4" height="9" viewBox="0 0 2.4 9"><circle cx="1.2" cy="1.3" r=".95" fill="#3c4043"/><circle cx="1.2" cy="4.5" r=".95" fill="#3c4043"/><circle cx="1.2" cy="7.7" r=".95" fill="#3c4043"/></svg>
<svg style="left:760.00px;top:556.00px;z-index:6;" width="54" height="56" viewBox="0 0 54 56"><path d="M5.1 31.6V49.7H45.1V31.6" fill="none" stroke="#d6d6d6" stroke-width="3.8"/><path d="M33.9 45L8.9 23.75L39.5 33.25L23.25 5.4L49.5 24.5" fill="none" stroke="#e6af63" stroke-width="5.2" stroke-linejoin="miter" stroke-miterlimit="1.5"/></svg>
<svg style="left:275.70px;top:153.15px;" width="5.2" height="5.2" viewBox="0 0 5.2 5.2"><circle cx="2.6" cy="2.6" r="2.5" fill="#d3dcea"/><path d="M1.2 2.6H4" stroke="#fff" stroke-width=".8"/><path d="M1.2 2.2H4" stroke="#9aa7c0" stroke-width=".4"/></svg>
<svg style="left:275.70px;top:163.48px;" width="5.2" height="5.2" viewBox="0 0 5.2 5.2"><circle cx="2.6" cy="2.6" r="2.5" fill="#d3dcea"/><path d="M1.2 2.6H4" stroke="#fff" stroke-width=".8"/><path d="M1.2 2.2H4" stroke="#9aa7c0" stroke-width=".4"/></svg>
<svg style="left:275.70px;top:204.80px;" width="5.2" height="5.2" viewBox="0 0 5.2 5.2"><circle cx="2.6" cy="2.6" r="2.5" fill="#d3dcea"/><path d="M1.2 2.6H4" stroke="#fff" stroke-width=".8"/><path d="M1.2 2.2H4" stroke="#9aa7c0" stroke-width=".4"/></svg>
<svg style="left:1009.40px;top:24.00px;" width="7.2" height="7.2" viewBox="0 0 7.2 7.2"><path d="M1 1L6.2 6.2M6.2 1L1 6.2" stroke="#a0a09f" stroke-width="1.1" fill="none"/></svg>
<!-- text -->
<span class="t u" style="left:20.50px;top:2.14px;font-size:9.6px;line-height:11.52px;color:#ececec;font-weight:bold;-webkit-text-stroke:0;transform:scaleX(0.8858);transform-origin:0 50%;">Activities</span>
<span class="t u" style="left:84.40px;top:2.14px;font-size:9.6px;line-height:11.52px;color:#ececec;font-weight:bold;-webkit-text-stroke:0;transform:scaleX(0.8698);transform-origin:0 50%;">Google Chrome</span>
<span class="t u" style="left:485.50px;top:2.14px;font-size:9.6px;line-height:11.52px;color:#ececec;font-weight:bold;-webkit-text-stroke:0;transform:scaleX(0.9044);transform-origin:0 50%;">Feb 27</span>
<span class="t u" style="left:517.40px;top:2.14px;font-size:9.6px;line-height:11.52px;color:#ececec;font-weight:bold;-webkit-text-stroke:0;transform:scaleX(0.8637);transform-origin:0 50%;">22:58</span>
<span class="t u" style="left:344.00px;top:21.64px;font-size:9.6px;line-height:11.52px;color:#878786;font-weight:bold;-webkit-text-stroke:0;transform:scaleX(0.9001);transform-origin:0 50%;">eclipse-workspace - jsp-hello-world/src/main/webapp/helloworld.jsp - Eclipse IDE</span>
<span class="t u" style="left:5.00px;top:41.54px;font-size:9.6px;line-height:11.52px;color:#a0a09f;transform:scaleX(0.8727);transform-origin:0 50%;">File</span>
<span class="t u" style="left:28.75px;top:41.54px;font-size:9.6px;line-height:11.52px;color:#a0a09f;transform:scaleX(0.8612);transform-origin:0 50%;">Edit</span>
<span class="t u" style="left:53.50px;top:41.54px;font-size:9.6px;line-height:11.52px;color:#a0a09f;transform:scaleX(0.8818);transform-origin:0 50%;">Navigate</span>
<span class="t u" style="left:97.25px;top:41.54px;font-size:9.6px;line-height:11.52px;color:#a0a09f;transform:scaleX(0.8715);transform-origin:0 50%;">Search</span>
<span class="t u" style="left:133.25px;top:41.54px;font-size:9.6px;line-height:11.52px;color:#a0a09f;transform:scaleX(0.9042);transform-origin:0 50%;">Project</span>
<span class="t u" style="left:170.50px;top:41.54px;font-size:9.6px;line-height:11.52px;color:#a0a09f;transform:scaleX(0.8376);transform-origin:0 50%;">Run</span>
<span class="t u" style="left:195.25px;top:41.54px;font-size:9.6px;line-height:11.52px;color:#a0a09f;transform:scaleX(0.9304);transform-origin:0 50%;">Window</span>
<span class="t u" style="left:236.50px;top:41.54px;font-size:9.6px;line-height:11.52px;color:#a0a09f;transform:scaleX(0.9628);transform-origin:0 50%;">Help</span>
<span class="t u" style="left:15.00px;top:83.56px;font-size:9.4px;line-height:11.28px;color:#2e3436;transform:scaleX(0.9182);transform-origin:0 50%;">Project Explorer</span>
<span class="t u" style="left:25.00px;top:101.61px;font-size:9.4px;line-height:11.28px;color:#2e3436;letter-spacing:-0.048px;">jsp-hello-world</span>
<span class="t u" style="left:36.00px;top:117.44px;font-size:9.4px;line-height:11.28px;color:#2e3436;transform:scaleX(0.9596);transform-origin:0 50%;">Deployment Descriptor: jsp-hello-world</span>
<span class="t u" style="left:36.00px;top:133.27px;font-size:9.4px;line-height:11.28px;color:#2e3436;transform:scaleX(0.9197);transform-origin:0 50%;">JAX-WS Web Services</span>
<span class="t u" style="left:36.00px;top:149.10px;font-size:9.4px;line-height:11.28px;color:#2e3436;transform:scaleX(0.8822);transform-origin:0 50%;">Java Resources</span>
<span class="t u" style="left:36.00px;top:164.93px;font-size:9.4px;line-height:11.28px;color:#2e3436;transform:scaleX(0.9590);transform-origin:0 50%;">build</span>
<span class="t u" style="left:36.00px;top:180.76px;font-size:9.4px;line-height:11.28px;color:#2e3436;transform:scaleX(0.9200);transform-origin:0 50%;">src</span>
<span class="t u" style="left:47.00px;top:196.59px;font-size:9.4px;line-height:11.28px;color:#2e3436;transform:scaleX(0.9101);transform-origin:0 50%;">main</span>
<span class="t u" style="left:58.00px;top:212.42px;font-size:9.4px;line-height:11.28px;color:#2e3436;transform:scaleX(0.8545);transform-origin:0 50%;">java</span>
<span class="t u" style="left:58.00px;top:228.25px;font-size:9.4px;line-height:11.28px;color:#2e3436;transform:scaleX(0.9286);transform-origin:0 50%;">webapp</span>
<span class="t u" style="left:69.00px;top:244.08px;font-size:9.4px;line-height:11.28px;color:#2e3436;transform:scaleX(0.9179);transform-origin:0 50%;">META-INF</span>
<span class="t u" style="left:69.00px;top:259.91px;font-size:9.4px;line-height:11.28px;color:#2e3436;transform:scaleX(0.9092);transform-origin:0 50%;">WEB-INF</span>
<span class="t u" style="left:69.00px;top:275.74px;font-size:9.4px;line-height:11.28px;color:#ffffff;transform:scaleX(0.9637);transform-origin:0 50%;">helloworld.jsp</span>
<span class="t u" style="left:25.00px;top:291.57px;font-size:9.4px;line-height:11.28px;color:#2e3436;transform:scaleX(0.9130);transform-origin:0 50%;">Servers</span>
<span class="t u" style="left:273.00px;top:83.36px;font-size:9.4px;line-height:11.28px;color:#43484a;transform:scaleX(0.9681);transform-origin:0 50%;">helloworld.jsp</span>
<span class="t u" style="left:273.40px;top:463.76px;font-size:9.4px;line-height:11.28px;color:#2e3436;transform:scaleX(0.8949);transform-origin:0 50%;">Markers</span>
<span class="t u" style="left:321.50px;top:463.76px;font-size:9.4px;line-height:11.28px;color:#2e3436;transform:scaleX(0.9243);transform-origin:0 50%;">Properties</span>
<span class="t u" style="left:379.30px;top:463.76px;font-size:9.4px;line-height:11.28px;color:#2e3436;transform:scaleX(0.9006);transform-origin:0 50%;">Servers</span>
<span class="t u" style="left:438.80px;top:463.76px;font-size:9.4px;line-height:11.28px;color:#2e3436;transform:scaleX(0.9159);transform-origin:0 50%;">Data Source Explorer</span>
<span class="t u" style="left:539.00px;top:463.76px;font-size:9.4px;line-height:11.28px;color:#2e3436;transform:scaleX(0.9100);transform-origin:0 50%;">Snippets</span>
<span class="t u" style="left:591.20px;top:463.76px;font-size:9.4px;line-height:11.28px;color:#2e3436;transform:scaleX(0.9256);transform-origin:0 50%;">Terminal</span>
<span class="t u" style="left:642.20px;top:463.76px;font-size:9.4px;line-height:11.28px;color:#2e3436;transform:scaleX(0.8836);transform-origin:0 50%;">Console</span>
<span class="t u" style="left:283.00px;top:481.96px;font-size:9.4px;line-height:11.28px;color:#ffffff;transform:scaleX(0.9411);transform-origin:0 50%;">Tomcat v9.0 Server at localhost  [Started, Synchronized]</span>
<span class="t m" style="left:270.33px;top:100.84px;font-size:8.1px;line-height:9.72px;color:#787878;">1</span>
<span class="t m" style="left:270.33px;top:111.17px;font-size:8.1px;line-height:9.72px;color:#787878;">2</span>
<span class="t m" style="left:270.33px;top:121.50px;font-size:8.1px;line-height:9.72px;color:#787878;">3</span>
<span class="t m" style="left:270.33px;top:131.83px;font-size:8.1px;line-height:9.72px;color:#787878;">4</span>
<span class="t m" style="left:270.33px;top:142.16px;font-size:8.1px;line-height:9.72px;color:#787878;">5</span>
<span class="t m" style="left:270.33px;top:152.49px;font-size:8.1px;line-height:9.72px;color:#787878;">6</span>
<span class="t m" style="left:270.33px;top:162.82px;font-size:8.1px;line-height:9.72px;color:#787878;">7</span>
<span class="t m" style="left:270.33px;top:173.15px;font-size:8.1px;line-height:9.72px;color:#787878;">8</span>
<span class="t m" style="left:270.33px;top:183.48px;font-size:8.1px;line-height:9.72px;color:#787878;">9</span>
<span class="t m" style="left:265.46px;top:193.81px;font-size:8.1px;line-height:9.72px;color:#787878;letter-spacing:-0.007px;">10</span>
<span class="t m" style="left:265.46px;top:204.14px;font-size:8.1px;line-height:9.72px;color:#787878;letter-spacing:-0.007px;">11</span>
<span class="t m" style="left:265.46px;top:214.47px;font-size:8.1px;line-height:9.72px;color:#787878;letter-spacing:-0.007px;">12</span>
<span class="t m" style="left:265.46px;top:224.80px;font-size:8.1px;line-height:9.72px;color:#787878;letter-spacing:-0.007px;">13</span>
<span class="t m" style="left:265.46px;top:235.13px;font-size:8.1px;line-height:9.72px;color:#787878;letter-spacing:-0.007px;">14</span>
<span class="t m" style="left:265.46px;top:245.46px;font-size:8.1px;line-height:9.72px;color:#787878;letter-spacing:-0.007px;">15</span>
<span class="t m" style="left:283.10px;top:100.84px;font-size:8.1px;line-height:9.72px;color:#bf5f3f;letter-spacing:-0.006px;">&lt;%@</span>
<span class="t m" style="left:302.58px;top:100.84px;font-size:8.1px;line-height:9.72px;color:#379393;letter-spacing:-0.006px;">page</span>
<span class="t m" style="left:326.93px;top:100.84px;font-size:8.1px;line-height:9.72px;color:#7f007f;letter-spacing:-0.003px;">language</span>
<span class="t m" style="left:365.89px;top:100.84px;font-size:8.1px;line-height:9.72px;color:#000000;">=</span>
<span class="t m" style="left:370.76px;top:100.84px;font-size:8.1px;line-height:9.72px;color:#2a00ff;font-style:italic;letter-spacing:-0.005px;">&quot;java&quot;</span>
<span class="t m" style="left:404.85px;top:100.84px;font-size:8.1px;line-height:9.72px;color:#7f007f;letter-spacing:-0.004px;">contentType</span>
<span class="t m" style="left:458.42px;top:100.84px;font-size:8.1px;line-height:9.72px;color:#000000;">=</span>
<span class="t m" style="left:463.29px;top:100.84px;font-size:8.1px;line-height:9.72px;color:#2a00ff;font-style:italic;letter-spacing:-0.003px;">&quot;text/html; charset=UTF-8&quot;</span>
<span class="t m" style="left:302.58px;top:111.17px;font-size:8.1px;line-height:9.72px;color:#7f007f;letter-spacing:-0.004px;">pageEncoding</span>
<span class="t m" style="left:361.02px;top:111.17px;font-size:8.1px;line-height:9.72px;color:#000000;">=</span>
<span class="t m" style="left:365.89px;top:111.17px;font-size:8.1px;line-height:9.72px;color:#2a00ff;font-style:italic;letter-spacing:-0.005px;">&quot;UTF-8&quot;</span>
<span class="t m" style="left:399.98px;top:111.17px;font-size:8.1px;line-height:9.72px;color:#bf5f3f;letter-spacing:-0.007px;">%&gt;</span>
<span class="t m" style="left:283.10px;top:121.50px;font-size:8.1px;line-height:9.72px;color:#bf5f3f;letter-spacing:-0.006px;">&lt;%@</span>
<span class="t m" style="left:297.71px;top:121.50px;font-size:8.1px;line-height:9.72px;color:#379393;letter-spacing:-0.006px;">page</span>
<span class="t m" style="left:322.06px;top:121.50px;font-size:8.1px;line-height:9.72px;color:#7f007f;letter-spacing:-0.005px;">import</span>
<span class="t m" style="left:351.28px;top:121.50px;font-size:8.1px;line-height:9.72px;color:#000000;">=</span>
<span class="t m" style="left:356.15px;top:121.50px;font-size:8.1px;line-height:9.72px;color:#2a00ff;font-style:italic;letter-spacing:-0.004px;">&quot;java.time.LocalTime&quot;</span>
<span class="t m" style="left:458.42px;top:121.50px;font-size:8.1px;line-height:9.72px;color:#bf5f3f;letter-spacing:-0.007px;">%&gt;</span>
<span class="t m" style="left:283.10px;top:131.83px;font-size:8.1px;line-height:9.72px;color:#bf5f3f;letter-spacing:-0.006px;">&lt;%@</span>
<span class="t m" style="left:297.71px;top:131.83px;font-size:8.1px;line-height:9.72px;color:#379393;letter-spacing:-0.006px;">page</span>
<span class="t m" style="left:322.06px;top:131.83px;font-size:8.1px;line-height:9.72px;color:#7f007f;letter-spacing:-0.005px;">import</span>
<span class="t m" style="left:351.28px;top:131.83px;font-size:8.1px;line-height:9.72px;color:#000000;">=</span>
<span class="t m" style="left:356.15px;top:131.83px;font-size:8.1px;line-height:9.72px;color:#2a00ff;font-style:italic;letter-spacing:-0.004px;">&quot;java.time.LocalDate&quot;</span>
<span class="t m" style="left:458.42px;top:131.83px;font-size:8.1px;line-height:9.72px;color:#bf5f3f;letter-spacing:-0.007px;">%&gt;</span>
<span class="t m" style="left:283.10px;top:142.16px;font-size:8.1px;line-height:9.72px;color:#379393;letter-spacing:-0.003px;">&lt;!DOCTYPE</span>
<span class="t m" style="left:331.80px;top:142.16px;font-size:8.1px;line-height:9.72px;color:#379393;letter-spacing:-0.006px;">html</span>
<span class="t m" style="left:351.28px;top:142.16px;font-size:8.1px;line-height:9.72px;color:#379393;">&gt;</span>
<span class="t m" style="left:283.10px;top:152.49px;font-size:8.1px;line-height:9.72px;color:#379393;letter-spacing:-0.005px;">&lt;html&gt;</span>
<span class="t m" style="left:283.10px;top:162.82px;font-size:8.1px;line-height:9.72px;color:#379393;letter-spacing:-0.005px;">&lt;head&gt;</span>
<span class="t m" style="left:283.10px;top:173.15px;font-size:8.1px;line-height:9.72px;color:#379393;letter-spacing:-0.006px;">&lt;meta</span>
<span class="t m" style="left:312.32px;top:173.15px;font-size:8.1px;line-height:9.72px;color:#7f007f;letter-spacing:-0.005px;">charset</span>
<span class="t m" style="left:346.41px;top:173.15px;font-size:8.1px;line-height:9.72px;color:#000000;">=</span>
<span class="t m" style="left:351.28px;top:173.15px;font-size:8.1px;line-height:9.72px;color:#2a00ff;font-style:italic;letter-spacing:-0.005px;">&quot;UTF-8&quot;</span>
<span class="t m" style="left:385.37px;top:173.15px;font-size:8.1px;line-height:9.72px;color:#379393;">&gt;</span>
<span class="t m" style="left:283.10px;top:183.48px;font-size:8.1px;line-height:9.72px;color:#379393;letter-spacing:-0.005px;">&lt;title&gt;</span>
<span class="t m" style="left:317.19px;top:183.48px;font-size:8.1px;line-height:9.72px;color:#000000;letter-spacing:-0.003px;">Insert title here</span>
<span class="t m" style="left:399.98px;top:183.48px;font-size:8.1px;line-height:9.72px;color:#379393;letter-spacing:-0.003px;">&lt;/title&gt;</span>
<span class="t m" style="left:283.10px;top:193.81px;font-size:8.1px;line-height:9.72px;color:#379393;letter-spacing:-0.005px;">&lt;/head&gt;</span>
<span class="t m" style="left:283.10px;top:204.14px;font-size:8.1px;line-height:9.72px;color:#379393;letter-spacing:-0.005px;">&lt;body&gt;</span>
<span class="t m" style="left:302.58px;top:214.47px;font-size:8.1px;line-height:9.72px;color:#000000;letter-spacing:-0.003px;">Date and Time on Server : </span>
<span class="t m" style="left:429.20px;top:214.47px;font-size:8.1px;line-height:9.72px;color:#bf5f3f;letter-spacing:-0.006px;">&lt;%=</span>
<span class="t m" style="left:443.81px;top:214.47px;font-size:8.1px;line-height:9.72px;color:#000000;letter-spacing:-0.003px;">LocalDate.now()</span>
<span class="t m" style="left:516.86px;top:214.47px;font-size:8.1px;line-height:9.72px;color:#bf5f3f;letter-spacing:-0.007px;">%&gt;</span>
<span class="t m" style="left:531.47px;top:214.47px;font-size:8.1px;line-height:9.72px;color:#bf5f3f;letter-spacing:-0.006px;">&lt;%=</span>
<span class="t m" style="left:546.08px;top:214.47px;font-size:8.1px;line-height:9.72px;color:#000000;letter-spacing:-0.003px;">LocalTime.now()</span>
<span class="t m" style="left:619.13px;top:214.47px;font-size:8.1px;line-height:9.72px;color:#bf5f3f;letter-spacing:-0.007px;">%&gt;</span>
<span class="t m" style="left:283.10px;top:235.13px;font-size:8.1px;line-height:9.72px;color:#379393;letter-spacing:-0.005px;">&lt;/body&gt;</span>
<span class="t m" style="left:283.10px;top:245.46px;font-size:8.1px;line-height:9.72px;color:#379393;letter-spacing:-0.005px;">&lt;/html&gt;</span>
<span class="t u" style="left:693.80px;top:37.54px;font-size:8.6px;line-height:10.32px;color:#3c4043;transform:scaleX(1.0626);transform-origin:0 50%;z-index:6;">Insert title here</span>
<span class="t u" style="left:753.80px;top:60.12px;font-size:8.8px;line-height:10.56px;color:#202124;letter-spacing:0.114px;z-index:6;">localhost</span>
<span class="t u" style="left:789.70px;top:60.12px;font-size:8.8px;line-height:10.56px;color:#6b6f73;letter-spacing:-0.038px;z-index:6;">:8080/jsp-hello-world/hellowor...</span>
<span class="t s" style="left:672.40px;top:82.74px;font-size:9.6px;line-height:11.52px;color:#000;letter-spacing:0.062px;z-index:6;">Date and Time on Server : 2023-02-27 22:58:26.833922056</span>
<span class="t u" style="left:812.40px;top:580.28px;font-size:27.2px;line-height:32.64px;color:#b3b3b3;transform:scaleX(0.9421);transform-origin:0 50%;z-index:6;-webkit-text-stroke:0.55px;">Max</span>
<span class="t c" style="left:863.20px;top:581.20px;font-size:26.5px;line-height:31.80px;color:#b3b3b3;letter-spacing:0.029px;z-index:6;">的每一天</span>
</div>
</body>
</html>
